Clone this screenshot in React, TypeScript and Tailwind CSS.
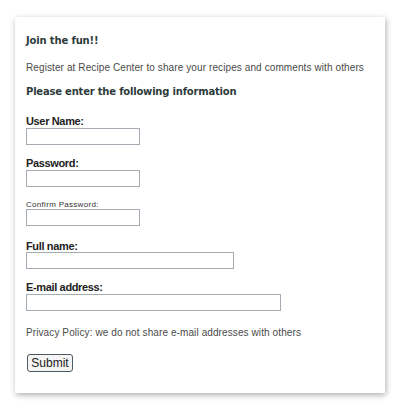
import React from "react";

const Label = ({ children, mt }: { children: React.ReactNode; mt: string }) => (
  <div className={`${mt} h-[12px] text-[11px] font-bold leading-[12px] tracking-[-0.35px] text-[#222] font-['Liberation_Sans',Arial,sans-serif]`}>
    {children}
  </div>
);

const Input = ({ w, mt }: { w: string; mt: string }) => (
  <div className={`${w} ${mt} h-[17px] border border-[#a4abb3] bg-white`} />
);

export default function App() {
  return (
    <div className="w-[400px] h-[411px] bg-white pt-[17px] px-[15px]">
      <div className="w-[370px] h-[376px] bg-white shadow-[1px_2px_6px_rgba(0,0,0,0.32)] pl-[11px] pt-[18px] font-['Liberation_Sans',Arial,sans-serif] text-[#444]">
        <div className="h-[12px] font-['DejaVu_Sans',Verdana,sans-serif] font-bold text-[10px] leading-[12px] tracking-[-0.15px] text-[#2e3b3b]">Join the fun!!</div>
        <div className="mt-[14px] h-[13px] text-[10px] leading-[13px] tracking-[0.1px] text-[#4a4a4a] whitespace-nowrap">Register at Recipe Center to share your recipes and comments with others</div>
        <div className="mt-[12px] h-[12px] font-['DejaVu_Sans',Verdana,sans-serif] font-bold text-[10px] leading-[12px] tracking-[-0.2px] text-[#2e3b3b] whitespace-nowrap">Please enter the following information</div>

        <Label mt="mt-[17px]">User Name:</Label>
        <Input w="w-[114px]" mt="mt-[1px]" />

        <Label mt="mt-[12px]">Password:</Label>
        <Input w="w-[114px]" mt="mt-[1px]" />

        <div className="mt-[13px] h-[9px] text-[8px] leading-[9px] text-[#333] tracking-[0.3px]">Confirm Password:</div>
        <Input w="w-[114px]" mt="mt-[0px]" />

        <Label mt="mt-[14px]">Full name:</Label>
        <Input w="w-[208px]" mt="mt-[0px]" />

        <Label mt="mt-[12px]">E-mail address:</Label>
        <Input w="w-[255px]" mt="mt-[1px]" />

        <div className="mt-[15px] h-[13px] text-[10px] leading-[13px] tracking-[0.1px] text-[#4a4a4a] whitespace-nowrap">Privacy Policy: we do not share e-mail addresses with others</div>
        <div className="mt-[15px] pl-[1px]">
          <button className="block w-[46px] h-[18px] border border-[#4d5a66] rounded-[3px] bg-[#f4f4f2] text-[12px] leading-[14px] text-[#222] font-['Liberation_Sans',Arial,sans-serif]">Submit</button>
        </div>
      </div>
    </div>
  );
}
